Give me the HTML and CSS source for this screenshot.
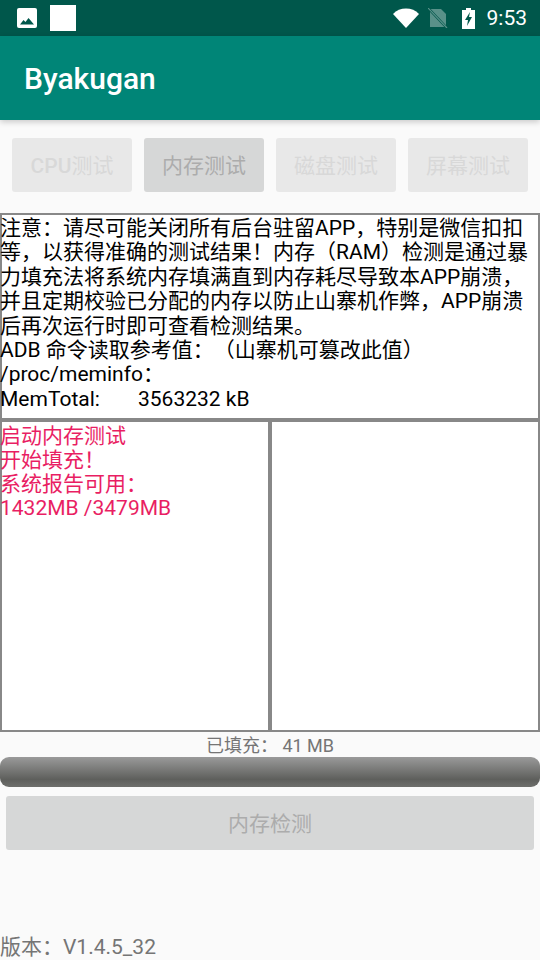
FILE: index.html
```html
<!DOCTYPE html>
<html lang="zh-CN">
<head>
    <meta charset="UTF-8">
    <meta name="viewport" content="width=device-width, initial-scale=1.0">
    <title>Byakugan</title>
    <link rel="stylesheet" href="styles.css">
</head>
<body>
    <div class="status-bar">
        <svg class="icon-image" viewBox="0 0 20 20">
            <rect width="20" height="20" rx="2" fill="#fff"/>
            <path d="M3 16.500L6.500 12l2 2L11.500 10 17 16.500z" fill="#00574b"/>
        </svg>
        <div class="notify-square"></div>
        <div class="status-right">
            <svg class="icon-wifi" viewBox="0 0 26 20">
                <path d="M0 6C3.500 2.300 8 0.500 13 0.500S22.500 2.300 26 6L13 20z" fill="#fff"/>
            </svg>
            <svg class="icon-sim" viewBox="0 0 20 20">
                <path d="M2 1h11l5 5v13H2z" fill="#fff" fill-opacity="0.35"/>
                <path d="M0.500 0.500l18 19" stroke="#00574b" stroke-width="2.500"/>
                <path d="M0 0l19 20" stroke="#fff" stroke-opacity="0.35" stroke-width="1.200"/>
            </svg>
            <svg class="icon-battery" viewBox="0 0 13 21">
                <path d="M4 0h5v2h4v19H0V2h4z" fill="#fff"/>
                <path d="M8 4L3 12h3l-1 6 5-9H7z" fill="#00574b"/>
            </svg>
            <span class="clock">9:53</span>
        </div>
    </div>
    <header class="app-bar">Byakugan</header>

    <div class="tabs">
        <button class="tab"><span class="latin">CPU</span>测试</button>
        <button class="tab active">内存测试</button>
        <button class="tab">磁盘测试</button>
        <button class="tab">屏幕测试</button>
    </div>

    <div class="box notice">
        <div class="box-text">注意：请尽可能关闭所有后台驻留APP，特别是微信扣扣等，以获得准确的测试结果！内存（RAM）检测是通过暴力填充法将系统内存填满直到内存耗尽导致本APP崩溃，并且定期校验已分配的内存以防止山寨机作弊，APP崩溃后再次运行时即可查看检测结果。<br>
        ADB 命令读取参考值：（山寨机可篡改此值）<br>
        /proc/meminfo：<br>
        <span class="mem-label">MemTotal:</span>3563232 kB</div>
    </div>

    <div class="logs">
        <div class="box log"><div class="box-text">启动内存测试<br>开始填充！<br>系统报告可用：<br>1432MB /3479MB</div></div>
        <div class="box log"></div>
    </div>

    <div class="filled">已填充： 41 MB</div>
    <div class="progress"></div>
    <button class="check">内存检测</button>
    <div class="version">版本：V1.4.5_32</div>
</body>
</html>
```

FILE: styles.css
```css
* {
    box-sizing: border-box;
}

body {
    display: flex;
    flex-direction: column;
    height: 960px;
    margin: 0;
    overflow: hidden;
    font-family: 'Roboto', 'Noto Sans CJK SC', sans-serif;
    text-spacing-trim: space-all;
    background: #fafafa;
}

.status-bar {
    display: flex;
    align-items: center;
    height: 36px;
    padding: 0 13px 0 17px;
    background: #00574b;
}

.icon-image {
    width: 20px;
    height: 20px;
}

.notify-square {
    width: 26px;
    height: 26px;
    margin-left: 13px;
    background: #fff;
}

.status-right {
    display: flex;
    align-items: center;
    margin-left: auto;
}

.icon-wifi {
    width: 26px;
    height: 20px;
}

.icon-sim {
    width: 20px;
    height: 20px;
    margin-left: 9px;
}

.icon-battery {
    width: 13px;
    height: 21px;
    margin-left: 14px;
}

.clock {
    margin-left: 12px;
    font-size: 21px;
    color: #fff;
}

.app-bar {
    position: relative;
    height: 84px;
    padding-left: 24px;
    font-size: 30px;
    font-weight: 500;
    line-height: 86px;
    color: #fff;
    background: #008577;
    box-shadow: 0 2px 6px rgba(0, 0, 0, 0.2);
}

.tabs {
    display: flex;
    gap: 12px;
    padding: 18px 12px 0;
}

.tab {
    width: 120px;
    height: 54px;
    padding: 0 0 2px;
    border: none;
    border-radius: 3px;
    font-family: inherit;
    font-size: 21px;
    color: #d8d8d8;
    background: #e8e8e8;
}

.tab .latin {
    font-weight: 500;
}

.tab.active {
    color: #acacac;
    background: #d6d7d7;
}

.box {
    border: 2px solid #888;
    font-size: 21px;
    line-height: 24px;
    background: #fff;
}

.box-text {
    margin-left: -2px;
}

.notice {
    height: 207px;
    margin-top: 21px;
    padding-top: 1px;
    line-height: 24.4px;
    color: #000;
}

.mem-label {
    display: inline-block;
    width: 138px;
}

.logs {
    display: flex;
    height: 312px;
}

.log {
    flex: 1;
    padding-top: 2px;
    color: #e91e63;
}

.filled {
    margin-top: 2px;
    font-size: 18px;
    line-height: 23px;
    text-align: center;
    color: #757575;
}

.progress {
    height: 30px;
    border-radius: 9px;
    background: linear-gradient(#9a9a9a, #5e5f5c 75%, #6e6f6c);
}

.check {
    height: 54px;
    margin: 9px 6px 0;
    padding: 0 0 2px;
    border: none;
    border-radius: 3px;
    font-family: inherit;
    font-size: 21px;
    color: #acacac;
    background: #d6d7d7;
}

.version {
    margin-top: auto;
    font-size: 21px;
    line-height: 26px;
    color: #757575;
}
```
